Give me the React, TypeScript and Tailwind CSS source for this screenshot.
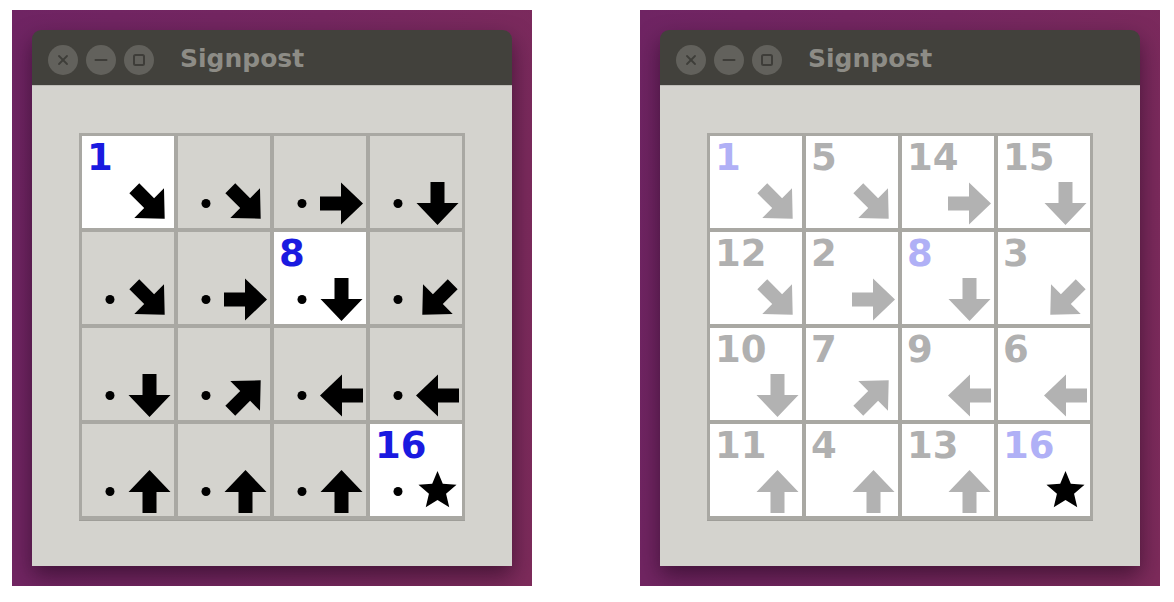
import React from "react";

type Dir = "r" | "d" | "l" | "u" | "dr" | "dl" | "ur" | "star";
const ANG: Record<string, number> = { r: 0, d: 90, l: 180, u: 270, dr: 45, dl: 135, ur: -45 };

const ARROW = "-21.5,-7 -0.5,-7 -0.5,-21 21.5,0 -0.5,21 -0.5,7 -21.5,7";

function starPoints(cx: number, cy: number, R: number, r: number) {
  const pts: string[] = [];
  for (let i = 0; i < 10; i++) {
    const rad = i % 2 === 0 ? R : r;
    const a = -Math.PI / 2 + (i * Math.PI) / 5;
    pts.push(`${(cx + rad * Math.cos(a)).toFixed(2)},${(cy + rad * Math.sin(a)).toFixed(2)}`);
  }
  return pts.join(" ");
}

type CellT = { n?: number; a: Dir; white?: boolean; dot?: boolean; blue?: boolean };

const ARROWS: Dir[][] = [
  ["dr", "dr", "r", "d"],
  ["dr", "r", "d", "dl"],
  ["d", "ur", "l", "l"],
  ["u", "u", "u", "star"],
];

const NUMS = [
  [1, 5, 14, 15],
  [12, 2, 8, 3],
  [10, 7, 9, 6],
  [11, 4, 13, 16],
];

const leftCells: CellT[] = ARROWS.flat().map((a, i) => {
  const n = NUMS.flat()[i];
  const fixed = n === 1 || n === 8 || n === 16;
  return {
    a,
    n: fixed ? n : undefined,
    white: fixed,
    dot: n !== 1,
    blue: fixed,
  };
});

const rightCells: CellT[] = ARROWS.flat().map((a, i) => {
  const n = NUMS.flat()[i];
  const fixed = n === 1 || n === 8 || n === 16;
  return { a, n, white: true, dot: false, blue: fixed };
});

function Cell({ c, solved }: { c: CellT; solved: boolean }) {
  const ink = solved ? "#b2b2b2" : "#000000";
  const numColor = solved
    ? c.blue
      ? "text-[#b0b0f6]"
      : "text-[#b0b0b0]"
    : "text-[#1a1ae0]";
  return (
    <div
      className={`relative w-[92px] h-[92px] ${c.white ? "bg-white" : "bg-[#d4d3ce]"}`}
    >
      <svg className="absolute inset-0" width="92" height="92" viewBox="0 0 92 92">
        {c.dot && <circle cx="28" cy="67.5" r="4.5" fill="#000" />}
        {c.a === "star" ? (
          <polygon points={starPoints(67.5, 67, 20, 9)} fill="#000" />
        ) : (
          <polygon
            points={ARROW}
            fill={ink}
            transform={`translate(67.5,67.5) rotate(${ANG[c.a]})`}
          />
        )}
      </svg>
      {c.n !== undefined && (
        <div
          className={`relative pl-[5px] pt-[4px] text-[37px] leading-[36px] font-bold ${numColor}`}
          style={{ fontFamily: '"DejaVu Sans", sans-serif' }}
        >
          {c.n}
        </div>
      )}
    </div>
  );
}

function Circle({ kind }: { kind: "x" | "min" | "max" }) {
  return (
    <div className="w-[30px] h-[30px] rounded-full bg-[#62615c] flex items-center justify-center">
      <svg width="30" height="30" viewBox="0 0 30 30">
        {kind === "x" && (
          <g stroke="#3e3d39" strokeWidth="1.8" strokeLinecap="round">
            <line x1="11" y1="11" x2="19" y2="19" />
            <line x1="19" y1="11" x2="11" y2="19" />
          </g>
        )}
        {kind === "min" && (
          <line x1="9.5" y1="15" x2="20.5" y2="15" stroke="#3e3d39" strokeWidth="2" strokeLinecap="round" />
        )}
        {kind === "max" && (
          <rect x="10" y="10" width="10" height="10" rx="1.5" fill="none" stroke="#3e3d39" strokeWidth="2" />
        )}
      </svg>
    </div>
  );
}

function Window({ cells, solved }: { cells: CellT[]; solved: boolean }) {
  return (
    <div className="w-[520px] h-[576px] p-[20px] overflow-hidden bg-[linear-gradient(100deg,#6f2463_0%,#752760_50%,#7d2b5b_100%)]">
      <div className="w-[480px] h-[536px] flex flex-col rounded-t-[9px] overflow-hidden shadow-[0_10px_22px_rgba(20,0,20,0.5)]">
        <div className="h-[55px] bg-[#42413c] flex items-center pl-[16px] pt-[4px] shrink-0">
          <div className="flex gap-[8px]">
            <Circle kind="x" />
            <Circle kind="min" />
            <Circle kind="max" />
          </div>
          <div
            className="ml-[26px] text-[25px] font-bold text-[#8d8c86] leading-none pb-[2px]"
            style={{ fontFamily: '"DejaVu Sans", sans-serif' }}
          >
            Signpost
          </div>
        </div>
        <div className="flex-1 bg-[#d4d3ce] flex items-center justify-center border-t border-[#bdbcb7]">
          <div className="bg-[#a9a8a3] pt-[3px] pl-[3px] pr-[3px] pb-[4px] grid grid-cols-4 gap-[4px] shadow-[0_1px_0_#9f9e99]">
            {cells.map((c, i) => (
              <Cell key={i} c={c} solved={solved} />
            ))}
          </div>
        </div>
      </div>
    </div>
  );
}

export default function App() {
  return (
    <div className="w-[1174px] h-[602px] bg-white pl-[12px] pt-[10px] flex gap-[108px]">
      <Window cells={leftCells} solved={false} />
      <Window cells={rightCells} solved={true} />
    </div>
  );
}
